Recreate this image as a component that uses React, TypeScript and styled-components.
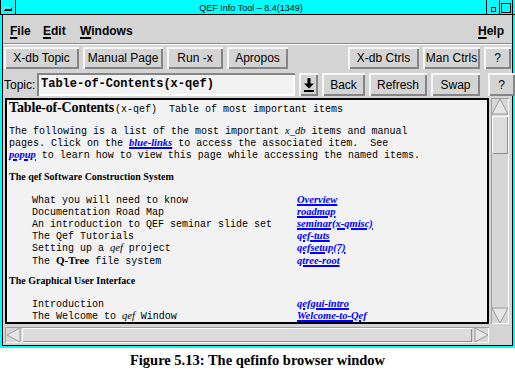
import React from 'react'
import styled, { createGlobalStyle } from 'styled-components'

const sans = `"Liberation Sans Narrow", "Liberation Sans", Arial, sans-serif`
const plainSans = `"Liberation Sans", Arial, sans-serif`
const serif = `"Liberation Serif", "Times New Roman", serif`
const mono = `"Liberation Mono", "Courier New", monospace`

const software = [
  { label: 'What you will need to know', link: 'Overview' },
  { label: 'Documentation Road Map', link: 'roadmap' },
  { label: 'An introduction to QEF seminar slide set', link: 'seminar(x-qmisc)' },
  { label: 'The Qef Tutorials', link: 'qef-tuts' },
  { label: 'Setting up a |qef| project', link: 'qefsetup(7)' },
  { label: 'The *Q-Tree* file system', link: 'qtree-root' },
]

const gui = [
  { label: 'Introduction', link: 'qefgui-intro' },
  { label: 'The Welcome to |qef| Window', link: 'Welcome-to-Qef' },
]

// |word| -> italic, *word* -> bold
const renderLabel = (text: string) =>
  text.split(/(\|[^|]+\||\*[^*]+\*)/).map((part, i) => {
    if (part.startsWith('|')) return <Em key={i}>{part.slice(1, -1)}</Em>
    if (part.startsWith('*')) return <Strong key={i}>{part.slice(1, -1)}</Strong>
    return <React.Fragment key={i}>{part}</React.Fragment>
  })

const Arrow: React.FC<{ dir: 'up' | 'down' | 'left' | 'right'; size: number }> = ({ dir, size }) => {
  const s = size
  const pts = {
    up: `${s / 2},1 ${s - 1},${s - 2} 1,${s - 2}`,
    down: `1,2 ${s - 1},2 ${s / 2},${s - 1}`,
    left: `1,${s / 2} ${s - 2},1 ${s - 2},${s - 1}`,
    right: `2,1 ${s - 1},${s / 2} 2,${s - 1}`,
  }[dir]
  return (
    <svg width={s} height={s} viewBox={`0 0 ${s} ${s}`}>
      <polygon points={pts} fill="#e6e6e6" stroke="#9a9a9a" strokeWidth="1" />
    </svg>
  )
}

const App: React.FC = () => {
  return (
    <Page>
      <GlobalStyle />
      <Window>
        <TitleBar>
          <MenuBox>
            <MenuGlyph />
          </MenuBox>
          <TitleText>QEF Info Tool – 8.4(1349)</TitleText>
          <WinBox>
            <IconGlyph $size={3} />
          </WinBox>
          <WinBox $edge>
            <IconGlyph $size={8} />
          </WinBox>
        </TitleBar>
        <Body>
          <MenuBar>
            <MenuItem $w={33}>
              <Key>F</Key>ile
            </MenuItem>
            <MenuItem $w={37}>
              <Key>E</Key>dit
            </MenuItem>
            <MenuItem>
              <Key>W</Key>indows
            </MenuItem>
            <MenuItem $right>
              <Key>H</Key>elp
            </MenuItem>
          </MenuBar>

          <ButtonRow $h={22} $mt={3}>
            <Button $w={75}>X-db Topic</Button>
            <Button $w={80}>Manual Page</Button>
            <Button $w={56}>Run -x</Button>
            <Button $w={61}>Apropos</Button>
            <Spacer />
            <Button $w={71}>X-db Ctrls</Button>
            <Button $w={57}>Man Ctrls</Button>
            <Button $w={27}>?</Button>
          </ButtonRow>

          <ButtonRow $h={23} $mt={4}>
            <Label>Topic:</Label>
            <TopicInput>Table-of-Contents(x-qef)</TopicInput>
            <Button $w={19}>
              <svg width="10" height="14" viewBox="0 0 10 14">
                <rect x="3.5" y="0" width="3" height="6" fill="#000" />
                <polygon points="0,5.5 10,5.5 5,10.5" fill="#000" />
                <rect x="0" y="12" width="10" height="2" fill="#000" />
              </svg>
            </Button>
            <Button $w={43}>Back</Button>
            <Button $w={58}>Refresh</Button>
            <Button $w={49}>Swap</Button>
            <Spacer />
            <Button $w={27}>?</Button>
          </ButtonRow>

          <ViewRow>
            <Doc>
              <TitleLine>
                <DocTitle>Table-of-Contents</DocTitle>
                <Mono>{'(x-qef)  Table of most important items'}</Mono>
              </TitleLine>
              <Line $mt={10}>
                {'The following is a list of the most important '}
                <Em>x_db</Em>
                {' items and manual'}
              </Line>
              <Line>
                {'pages. Click on the '}
                <Link>blue-links</Link>
                {' to access the associated item.  See'}
              </Line>
              <Line>
                <Link>popup</Link>
                {' to learn how to view this page while accessing the named items.'}
              </Line>

              <Heading $mt={10}>The qef Software Construction System</Heading>
              <Items $mt={11}>
                {software.map((item) => (
                  <ItemRow key={item.link}>
                    <span>{renderLabel(item.label)}</span>
                    <Link>{item.link}</Link>
                  </ItemRow>
                ))}
              </Items>

              <Heading $mt={9}>The Graphical User Interface</Heading>
              <Items $mt={11}>
                {gui.map((item) => (
                  <ItemRow key={item.link}>
                    <span>{renderLabel(item.label)}</span>
                    <Link>{item.link}</Link>
                  </ItemRow>
                ))}
              </Items>
            </Doc>

            <VScroll>
              <ArrowBox $w={18} $h={18}>
                <Arrow dir="up" size={18} />
              </ArrowBox>
              <VThumb />
              <Track />
              <ArrowBox $w={18} $h={18}>
                <Arrow dir="down" size={18} />
              </ArrowBox>
            </VScroll>
          </ViewRow>

          <HScroll>
            <ArrowBox $w={17} $h={16}>
              <Arrow dir="left" size={16} />
            </ArrowBox>
            <HThumb />
            <ArrowBox $w={17} $h={16}>
              <Arrow dir="right" size={16} />
            </ArrowBox>
          </HScroll>
        </Body>
      </Window>
      <Caption>Figure 5.13: The qefinfo browser window</Caption>
    </Page>
  )
}

const GlobalStyle = createGlobalStyle`
  html, body {
    margin: 0;
    padding: 0;
    background: #ffffff;
  }
  body {
    overflow: hidden;
  }
`

const Page = styled.div`
  width: 515px;
  height: 371px;
  display: flex;
  flex-direction: column;
`

const Window = styled.div`
  width: 515px;
  height: 348px;
  box-sizing: border-box;
  background: #00ffff;
  display: flex;
  flex-direction: column;
`

const TitleBar = styled.div`
  height: 15px;
  box-sizing: border-box;
  border-bottom: 1px solid #000;
  padding-right: 2px;
  display: flex;
`

const MenuBox = styled.div`
  width: 14px;
  border-left: 1px solid #000;
  border-right: 1px solid #000;
  display: flex;
  align-items: flex-end;
  justify-content: center;
  padding-bottom: 3px;
  box-sizing: content-box;
`

const MenuGlyph = styled.div`
  width: 6px;
  height: 1px;
  border: 1px solid #000;
  border-top-color: #c8ffff;
  border-left-color: #c8ffff;
  border-bottom-width: 2px;
`

const TitleText = styled.div`
  flex: 1;
  text-align: center;
  font-family: ${plainSans};
  font-size: 9px;
  line-height: 14px;
  padding-top: 1px;
  color: #000;
`

const WinBox = styled.div<{ $edge?: boolean }>`
  width: 12px;
  border-left: 1px solid #000;
  border-right: ${(p) => (p.$edge ? '1px solid #000' : 'none')};
  display: flex;
  align-items: flex-end;
  justify-content: center;
  padding-bottom: 1px;
`

const IconGlyph = styled.div<{ $size: number }>`
  width: ${(p) => p.$size}px;
  height: ${(p) => p.$size}px;
  border: 1px solid #000;
  margin-bottom: ${(p) => (p.$size < 5 ? 1 : 0)}px;
`

const Body = styled.div`
  margin: 0 2px 2px;
  border: 1px solid #000;
  border-top: none;
  background: #d4d4d4;
  flex: 1;
  display: flex;
  flex-direction: column;
`

const MenuBar = styled.div`
  height: 29px;
  box-sizing: border-box;
  padding: 9px 8px 0 7px;
  border-bottom: 1px solid #8a8a8a;
  box-shadow: 0 1px 0 #ffffff;
  display: flex;
`

const MenuItem = styled.div<{ $w?: number; $right?: boolean }>`
  width: ${(p) => (p.$w ? `${p.$w}px` : 'auto')};
  margin-left: ${(p) => (p.$right ? 'auto' : '0')};
  font-family: ${sans};
  font-weight: bold;
  font-size: 12px;
  line-height: 14px;
  color: #000;
`

const Key = styled.span`
  text-decoration: underline;
  text-decoration-thickness: 2px;
  text-underline-offset: 2px;
`

const ButtonRow = styled.div<{ $h: number; $mt: number }>`
  height: ${(p) => p.$h}px;
  margin-top: ${(p) => p.$mt}px;
  padding: 0 1px 0 1px;
  display: flex;
  gap: 4px;
`

const Spacer = styled.div`
  flex: 1;
`

const Button = styled.div<{ $w: number }>`
  width: ${(p) => p.$w}px;
  flex-shrink: 0;
  box-sizing: border-box;
  background: #d4d4d4;
  box-shadow: inset 2px 2px 0 #f6f6f6, inset -2px -2px 0 #858585;
  display: flex;
  align-items: center;
  justify-content: center;
  font-family: ${sans};
  font-size: 12px;
  line-height: 14px;
  color: #000;
  white-space: nowrap;
`

const Label = styled.div`
  width: 29px;
  flex-shrink: 0;
  display: flex;
  align-items: center;
  font-family: ${sans};
  font-size: 12px;
  color: #000;
`

const TopicInput = styled.div`
  width: 258px;
  flex-shrink: 0;
  box-sizing: border-box;
  padding-left: 4px;
  background: #f2f2f2;
  box-shadow: inset 2px 2px 0 #858585, inset -2px -2px 0 #ffffff;
  font-family: ${mono};
  font-weight: bold;
  font-size: 12px;
  line-height: 23px;
  color: #000;
  white-space: pre;
`

const ViewRow = styled.div`
  margin-top: 2px;
  padding-left: 2px;
  height: 226px;
  display: grid;
  grid-template-columns: 484px 18px;
  column-gap: 2px;
`

const Doc = styled.div`
  box-sizing: border-box;
  border: 2px solid #000;
  background: #f2f2f2;
  padding: 0 2px;
  overflow: hidden;
  color: #000;
`

const TitleLine = styled.div`
  height: 15px;
  line-height: 15px;
  white-space: pre;
  font-family: ${serif};
  font-size: 14px;
`

const DocTitle = styled.span`
  font-weight: bold;
  letter-spacing: -0.15px;
`

const Mono = styled.span`
  font-family: ${mono};
  font-size: 10px;
  line-height: 15px;
  margin-left: 1px;
`

const Line = styled.div<{ $mt?: number }>`
  height: 12px;
  margin-top: ${(p) => p.$mt ?? 0}px;
  line-height: 12px;
  white-space: pre;
  font-family: ${mono};
  font-size: 10px;
`

const Heading = styled.div<{ $mt: number }>`
  height: 12px;
  margin-top: ${(p) => p.$mt}px;
  line-height: 12px;
  white-space: pre;
  font-family: ${serif};
  font-weight: bold;
  font-size: 10px;
`

const Items = styled.div<{ $mt: number }>`
  margin-top: ${(p) => p.$mt}px;
`

const ItemRow = styled.div`
  height: 12px;
  padding-left: 23px;
  display: grid;
  grid-template-columns: 265px auto;
  align-items: baseline;
  line-height: 12px;
  white-space: pre;
  font-family: ${mono};
  font-size: 10px;
`

const Link = styled.span`
  color: #0000ff;
  font-family: ${serif};
  font-style: italic;
  font-weight: bold;
  font-size: 10.5px;
  line-height: 12px;
  text-decoration: underline;
  text-decoration-thickness: 2px;
  text-underline-offset: 1px;
  justify-self: start;
`

const Em = styled.span`
  font-family: ${serif};
  font-style: italic;
  font-size: 10.5px;
  line-height: 12px;
`

const Strong = styled.span`
  font-family: ${serif};
  font-weight: bold;
  font-size: 11px;
  line-height: 12px;
`

const VScroll = styled.div`
  display: flex;
  flex-direction: column;
  background: #d6d6d6;
  box-shadow: inset 1px 1px 0 #a0a0a0, inset -1px -1px 0 #ffffff;
`

const ArrowBox = styled.div<{ $w: number; $h: number }>`
  width: ${(p) => p.$w}px;
  height: ${(p) => p.$h}px;
  flex-shrink: 0;
  display: flex;
  align-items: center;
  justify-content: center;
`

const VThumb = styled.div`
  height: 38px;
  margin: 0 1px;
  background: #dcdcdc;
  box-shadow: inset 1px 1px 0 #ffffff, inset -1px -1px 0 #8c8c8c;
`

const Track = styled.div`
  flex: 1;
`

const HScroll = styled.div`
  margin: 3px 0 0 2px;
  width: 484px;
  height: 16px;
  display: flex;
  background: #d6d6d6;
  box-shadow: inset 1px 1px 0 #a0a0a0, inset -1px -1px 0 #ffffff;
`

const HThumb = styled.div`
  flex: 1;
  margin: 1px 0;
  background: #dcdcdc;
  box-shadow: inset 1px 1px 0 #ffffff, inset -1px -1px 0 #8c8c8c;
`

const Caption = styled.div`
  padding-top: 4px;
  text-align: center;
  font-family: ${serif};
  font-weight: bold;
  font-size: 14.5px;
  line-height: 16px;
  color: #000;
`

export default App
